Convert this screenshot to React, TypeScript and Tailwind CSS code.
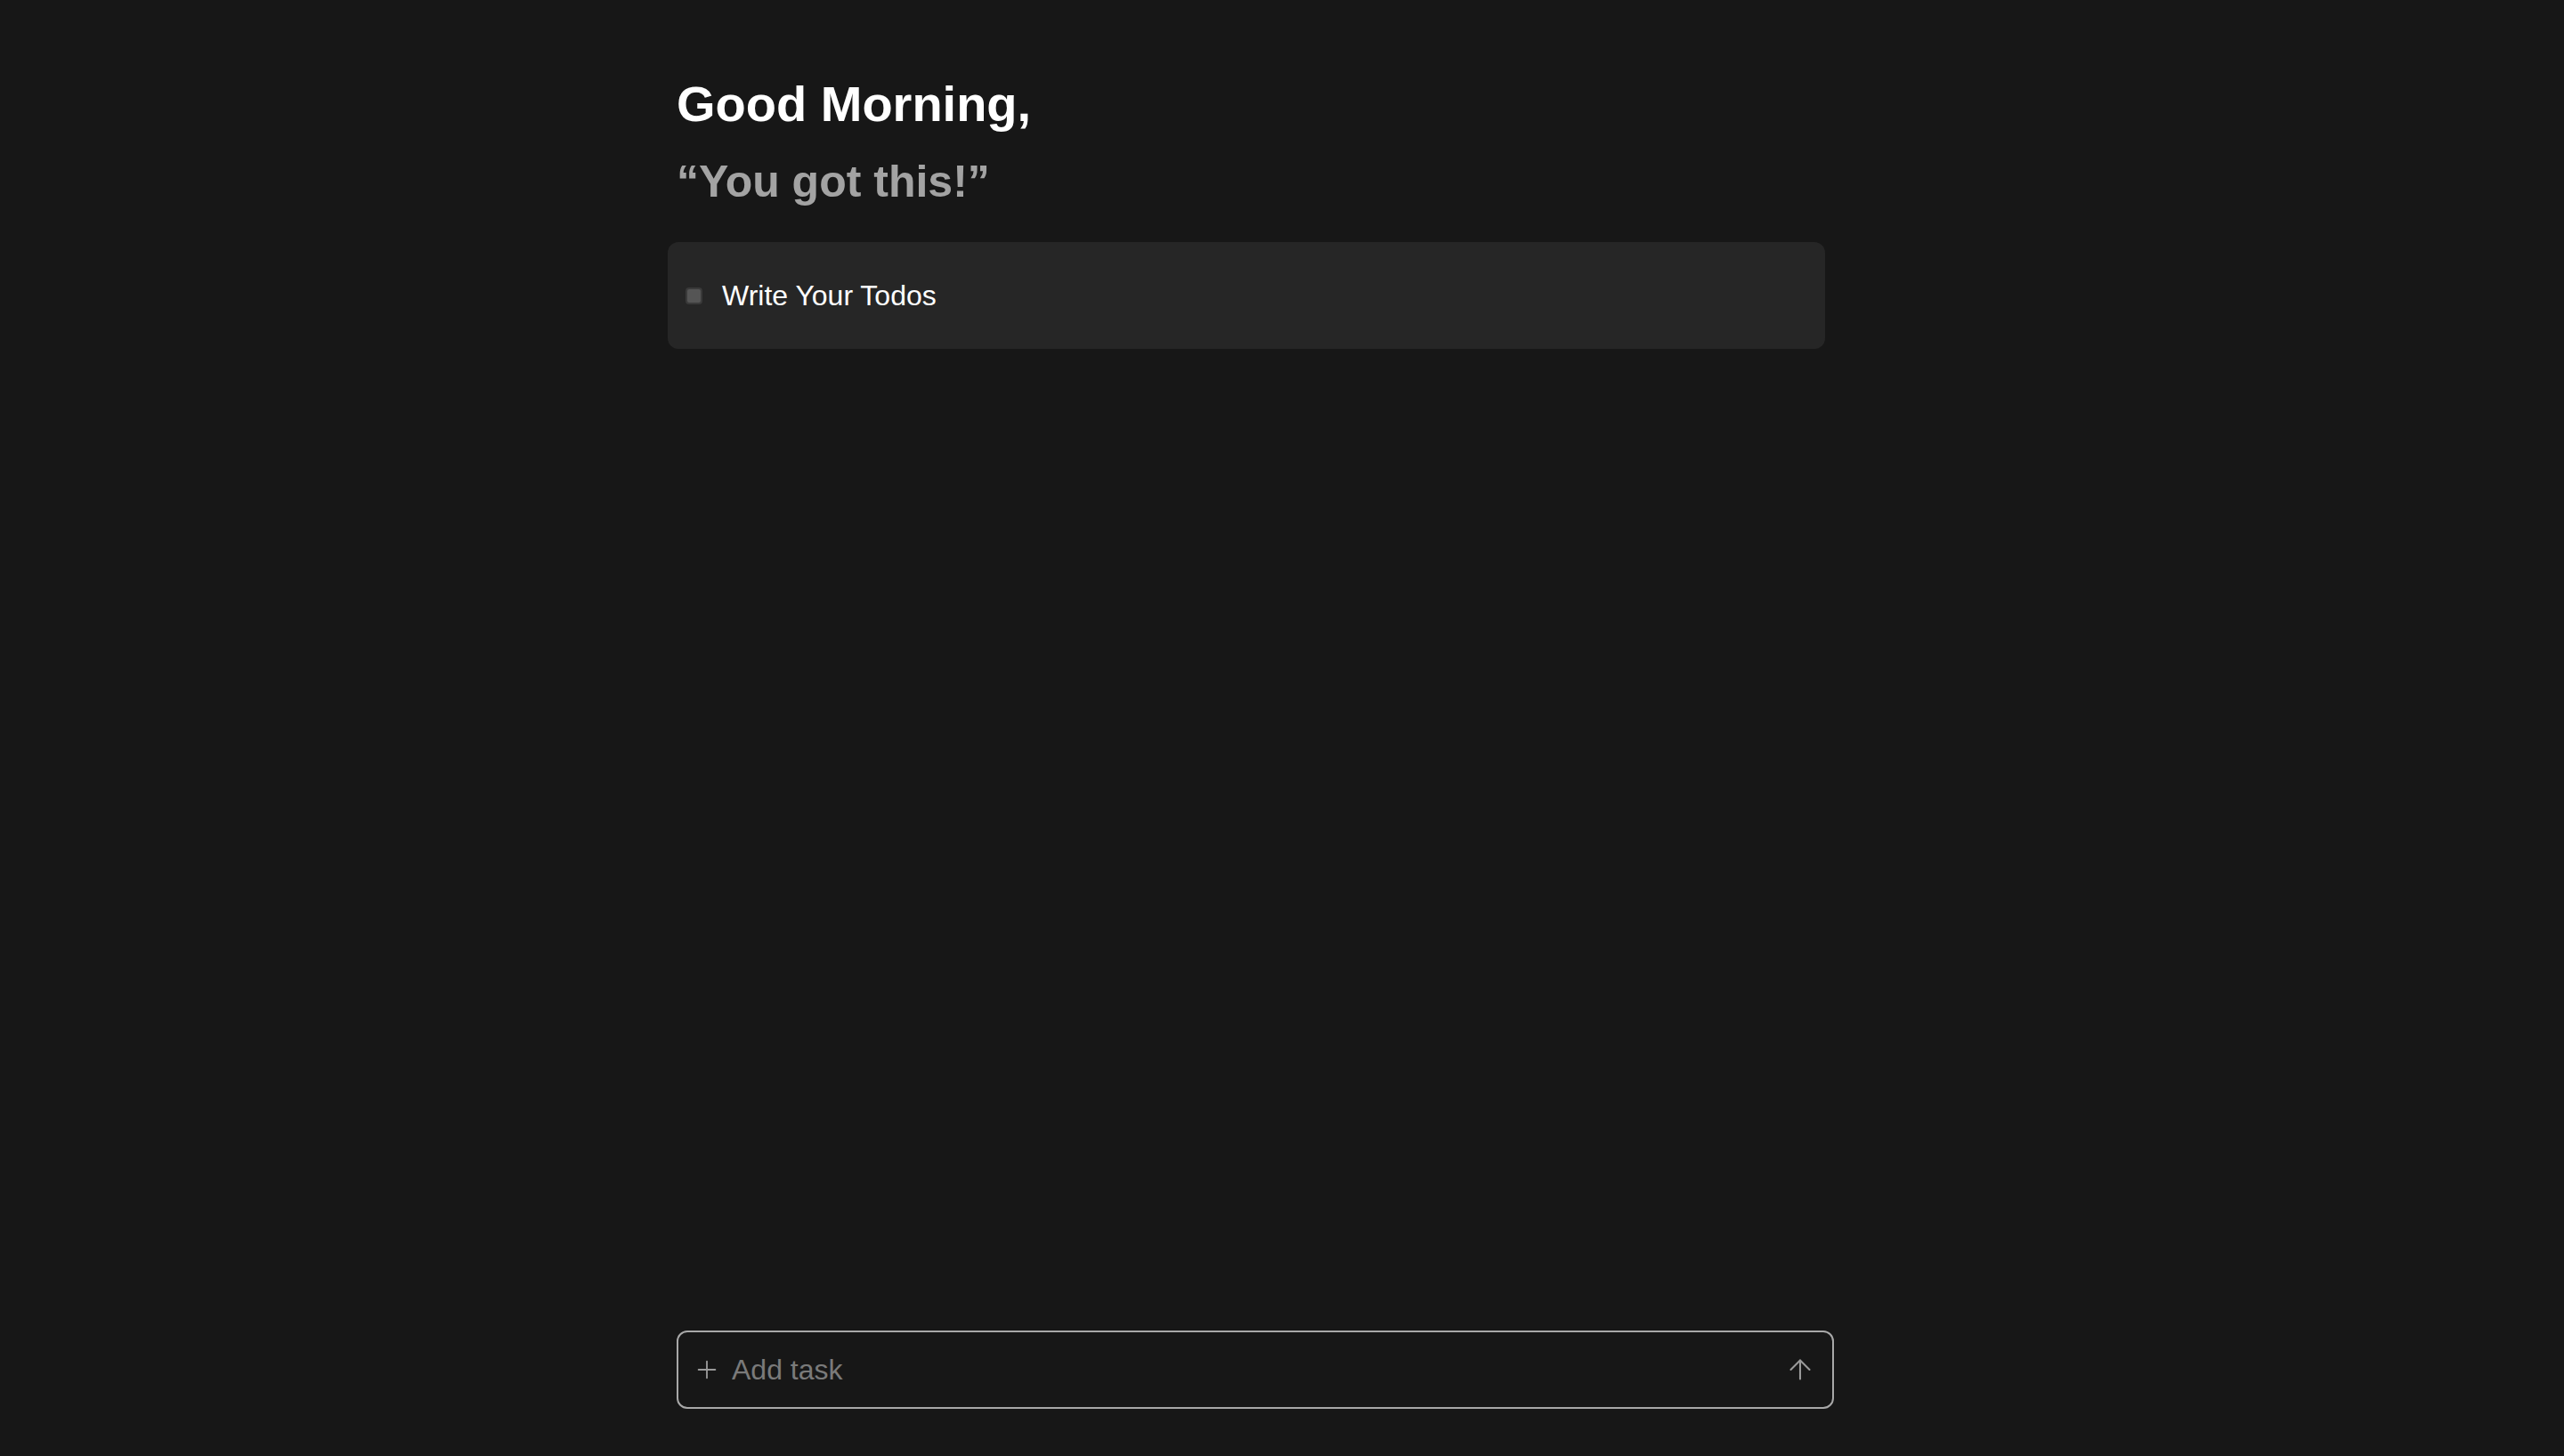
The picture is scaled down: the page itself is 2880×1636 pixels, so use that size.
import React from 'react'
import { ArrowUp, Plus } from 'lucide-react'

const todos = [{ id: 1, title: 'Write Your Todos', done: false }]

const App: React.FC = () => {
    const [text, setText] = React.useState('')

    return (
        <div className="flex flex-col h-[1636px] bg-[#171717] font-['Liberation_Sans',Arial,sans-serif] overflow-hidden">
            <main className="flex flex-col flex-1 w-[1300px] ml-[760px]">
                <h1 className="mt-[89px] text-[56px] leading-[56px] font-bold text-white">Good Morning,</h1>
                <p className="mt-[34px] text-[50px] leading-[50px] font-bold text-[#a3a3a3]">“You got this!”</p>

                <ul className="flex flex-col w-[1300px] mt-[43px] -ml-[10px]">
                    {todos.map((todo) => (
                        <li
                            key={todo.id}
                            className="flex flex-row items-center h-[120px] pl-[20px] bg-[#262626] rounded-[12px]"
                        >
                            <span className="w-[19px] h-[19px] rounded-[4px] bg-[#555555] border-2 border-[#3a3a3a]" />
                            <span className="ml-[22px] text-[32px] leading-none text-white">{todo.title}</span>
                        </li>
                    ))}
                </ul>
            </main>

            <form
                className="flex flex-row items-center w-[1300px] h-[88px] ml-[760px] mb-[53px] pl-[16px] pr-[18px] border-2 border-[#a8a8a8] rounded-[12px]"
                onSubmit={(e) => e.preventDefault()}
            >
                <Plus size={32} strokeWidth={1.4} className="text-[#9a9a9a] shrink-0" />
                <input
                    value={text}
                    onChange={(e) => setText(e.target.value)}
                    placeholder="Add task"
                    className="flex-1 ml-[12px] bg-transparent text-[32px] text-white placeholder:text-[#7a7a7a] outline-none"
                />
                <button type="submit" className="shrink-0">
                    <ArrowUp size={36} strokeWidth={1.4} className="text-[#9a9a9a]" />
                </button>
            </form>
        </div>
    )
}

export default App
